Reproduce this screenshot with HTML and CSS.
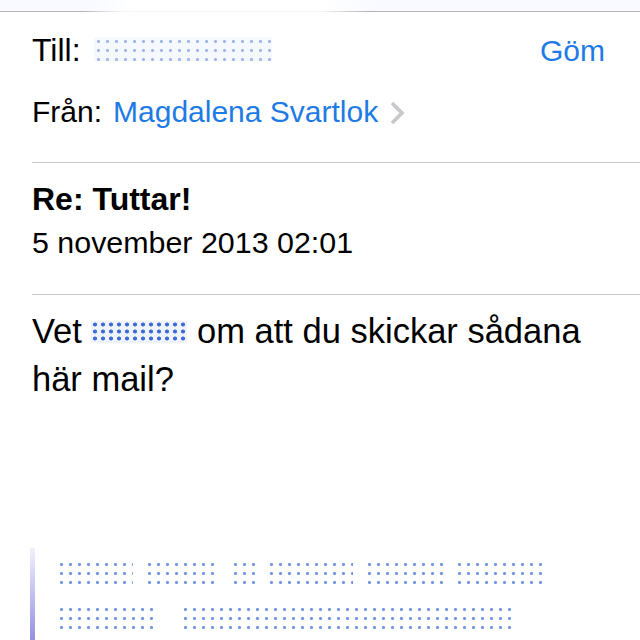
FILE: index.html
```html
<!DOCTYPE html>
<html lang="sv">
<head>
    <meta charset="UTF-8">
    <meta name="viewport" content="width=device-width, initial-scale=1.0">
    <title>Re: Tuttar!</title>
    <link rel="stylesheet" href="styles.css">
</head>
<body>
    <div class="topbar"></div>

    <section class="header">
        <div class="row to">
            <span class="label">Till:</span>
            <span class="redact redact-to"></span>
            <span class="hide">Göm</span>
        </div>
        <div class="row from">
            <span class="label">Från:</span>
            <span class="sender">Magdalena Svartlok</span>
            <svg class="chevron" width="18" height="26" viewBox="0 0 18 26">
                <path d="M4 3 L14 13 L4 23" fill="none" stroke="#c7c7cc" stroke-width="3.6"/>
            </svg>
        </div>
    </section>

    <hr class="sep">

    <section class="subject">
        <div class="title">Re: Tuttar!</div>
        <div class="date">5 november 2013 02:01</div>
    </section>

    <hr class="sep">

    <div class="message">
        Vet <span class="redact redact-name"></span> om att du skickar sådana<br>
        här mail?
    </div>

    <div class="quote">
        <div class="quote-line">
            <span class="redact dots" style="width: 76px"></span>
            <span class="redact dots" style="width: 74px"></span>
            <span class="redact dots" style="width: 24px"></span>
            <span class="redact dots" style="width: 86px"></span>
            <span class="redact dots" style="width: 78px"></span>
            <span class="redact dots" style="width: 90px"></span>
        </div>
        <div class="quote-line">
            <span class="redact dots" style="width: 96px"></span>
            <span class="redact dots" style="width: 330px"></span>
        </div>
    </div>
</body>
</html>
```

FILE: styles.css
```css
* {
    margin: 0;
    padding: 0;
    box-sizing: border-box;
}

body {
    width: 640px;
    height: 640px;
    overflow: hidden;
    background: #fff;
    color: #000;
    font-family: 'Liberation Sans', Arial, sans-serif;
}

/* top edge of the screen */
.topbar {
    height: 12px;
    background: linear-gradient(to right, #f8faff 0, #f8faff 90px, #fff 130px, #fff 320px, #f8faff 380px);
    position: relative;
}

.topbar::after {
    content: "";
    position: absolute;
    left: 0;
    right: 0;
    bottom: 0;
    height: 1px;
    background: linear-gradient(to right, #b2b2b2 0, #b2b2b2 80px, rgba(178,178,178,0.1) 120px, rgba(178,178,178,0.1) 320px, #b2b2b2 370px);
}

/* header: to / from */
.header {
    padding: 18px 35px 30px 32px;
}

.row {
    display: flex;
    align-items: baseline;
    height: 40px;
    line-height: 40px;
}

.row.to {
    font-size: 32px;
}

.row.from {
    margin-top: 22px;
    font-size: 30px;
}

.hide {
    margin-left: auto;
    font-size: 30px;
    color: #1e7be6;
}

.sender {
    margin-left: 11px;
    color: #1e7be6;
}

.chevron {
    align-self: center;
    margin-left: 10px;
    margin-top: 2px;
}

.sep {
    border: none;
    height: 1px;
    margin-left: 32px;
    background: #c8c8c8;
}

/* subject */
.subject {
    padding: 16px 32px 32px;
}

.title {
    font-size: 32px;
    font-weight: bold;
    line-height: 40px;
}

.date {
    margin-top: 3px;
    font-size: 30.4px;
    line-height: 40px;
}

/* message body */
.message {
    padding: 12px 32px 0;
    font-size: 34.5px;
    line-height: 48px;
}

/* pixelated redactions */
.redact {
    display: inline-block;
    background-image: radial-gradient(circle, #4f77dc 1.2px, transparent 1.8px);
    background-size: 9px 9px;
}

.redact-to {
    width: 178px;
    height: 24px;
    margin-left: 13px;
    vertical-align: -3px;
    opacity: 0.55;
    background-color: #eef3fd;
}

.redact-name {
    width: 96px;
    height: 22px;
    background-image: radial-gradient(circle, #3f6ad8 1.7px, transparent 2.3px);
    background-size: 8px 7px;
    background-color: #eef3fd;
}

/* quoted text */
.quote {
    margin: 145px 0 0 30px;
    padding: 12px 0 0 22px;
    border-left: 5px solid #b7b3ee;
    border-image: linear-gradient(to bottom, #f3f2fd, #8c86df) 1;
    height: 100px;
}

.quote-line {
    display: flex;
    gap: 12px;
    height: 24px;
}

.quote-line + .quote-line {
    margin-top: 21px;
    gap: 28px;
}

.dots {
    height: 26px;
    opacity: 0.8;
}
```
